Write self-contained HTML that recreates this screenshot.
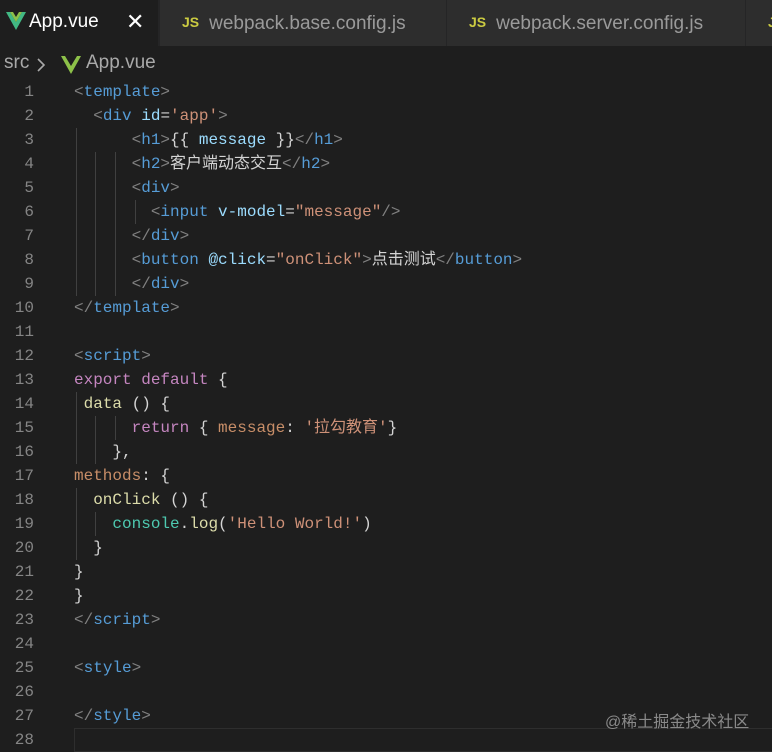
<!DOCTYPE html><html><head><meta charset="utf-8"><style>
body{margin:0;width:772px;height:750px;background:#1e1e1e;overflow:hidden;position:relative;font-family:"Liberation Sans","Noto Sans CJK SC",sans-serif}
.tabs{position:absolute;left:0;top:0;width:772px;height:46px;background:#252526}
.tab{position:absolute;top:0;height:46px;background:#2d2d2d;color:#9a9a9a;font-size:19px;line-height:44px}
.tab.a{background:#1e1e1e;color:#fff}
.js{color:#cbcb41;font-weight:bold;font-size:14px;margin-right:10px;vertical-align:2px}
.crumb{position:absolute;top:52px;color:#a9a9a9;font-size:19px}
.code{position:absolute;left:0;top:80px;font-family:"Liberation Mono","Noto Sans CJK SC",monospace;font-size:16px;color:#d4d4d4}
.l{height:24px;line-height:24px;white-space:pre;position:relative}
.n{display:inline-block;width:34px;text-align:right;color:#858585;margin-right:40px}
.g{color:#808080}.t{color:#569cd6}.at{color:#9cdcfe}.s{color:#ce9178}.k{color:#c586c0}.f{color:#dcdcaa}.c{color:#4ec9b0}.p{color:#c88e68}
.ig{position:absolute;width:1px;background:#404040}
</style></head><body>
<div class="tabs">
<div class="tab a" style="left:0;width:158px"><svg width="20" height="18" style="position:absolute;left:6px;top:12px" viewBox="0 0 20 18"><path d="M0 0h4l6 10 6-10h4L10 18z" fill="#41b883"/><path d="M4 0h3l3 5 3-5h3l-6 10z" fill="#8dc149"/></svg><span style="position:absolute;left:29px">App.vue</span><span style="position:absolute;left:126px;font-size:22px">✕</span></div>
<div class="tab" style="left:160px;width:286px"><span style="padding-left:22px"><span class="js">JS</span>webpack.base.config.js</span></div>
<div class="tab" style="left:447px;width:298px"><span style="padding-left:22px"><span class="js">JS</span>webpack.server.config.js</span></div>
<div class="tab" style="left:746px;width:30px"><span style="padding-left:22px"><span class="js">JS</span></span></div>
</div>
<div class="crumb" style="left:4px">src</div>
<svg width="10" height="16" style="position:absolute;left:36px;top:57px" viewBox="0 0 10 16"><path d="M2 2l6 6-6 6" stroke="#a9a9a9" stroke-width="1.6" fill="none"/></svg>
<svg width="20" height="18" style="position:absolute;left:61px;top:56px" viewBox="0 0 20 18"><path d="M0 0h4l6 10 6-10h4L10 18z" fill="#8dc149"/></svg>
<div class="crumb" style="left:86px">App.vue</div>
<div class="ig" style="left:76px;top:128px;height:168px"></div>
<div class="ig" style="left:95px;top:152px;height:144px"></div>
<div class="ig" style="left:115px;top:152px;height:144px"></div>
<div class="ig" style="left:135px;top:200px;height:24px"></div>
<div class="ig" style="left:76px;top:392px;height:72px"></div>
<div class="ig" style="left:95px;top:416px;height:48px"></div>
<div class="ig" style="left:115px;top:416px;height:24px"></div>
<div class="ig" style="left:76px;top:488px;height:72px"></div>
<div class="ig" style="left:95px;top:512px;height:24px"></div>
<div style="position:absolute;left:74px;top:728px;width:698px;height:22px;border:1px solid #2e2e2e;border-right:none"></div>
<div class="code">
<div class="l"><span class="n">1</span><span class="g">&lt;</span><span class="t">template</span><span class="g">&gt;</span></div>
<div class="l"><span class="n">2</span>  <span class="g">&lt;</span><span class="t">div</span> <span class="at">id</span>=<span class="s">'app'</span><span class="g">&gt;</span></div>
<div class="l"><span class="n">3</span>      <span class="g">&lt;</span><span class="t">h1</span><span class="g">&gt;</span>{{ <span class="at">message</span> }}<span class="g">&lt;/</span><span class="t">h1</span><span class="g">&gt;</span></div>
<div class="l"><span class="n">4</span>      <span class="g">&lt;</span><span class="t">h2</span><span class="g">&gt;</span>客户端动态交互<span class="g">&lt;/</span><span class="t">h2</span><span class="g">&gt;</span></div>
<div class="l"><span class="n">5</span>      <span class="g">&lt;</span><span class="t">div</span><span class="g">&gt;</span></div>
<div class="l"><span class="n">6</span>        <span class="g">&lt;</span><span class="t">input</span> <span class="at">v-model</span>=<span class="s">"message"</span><span class="g">/&gt;</span></div>
<div class="l"><span class="n">7</span>      <span class="g">&lt;/</span><span class="t">div</span><span class="g">&gt;</span></div>
<div class="l"><span class="n">8</span>      <span class="g">&lt;</span><span class="t">button</span> <span class="at">@click</span>=<span class="s">"onClick"</span><span class="g">&gt;</span>点击测试<span class="g">&lt;/</span><span class="t">button</span><span class="g">&gt;</span></div>
<div class="l"><span class="n">9</span>      <span class="g">&lt;/</span><span class="t">div</span><span class="g">&gt;</span></div>
<div class="l"><span class="n">10</span><span class="g">&lt;/</span><span class="t">template</span><span class="g">&gt;</span></div>
<div class="l"><span class="n">11</span></div>
<div class="l"><span class="n">12</span><span class="g">&lt;</span><span class="t">script</span><span class="g">&gt;</span></div>
<div class="l"><span class="n">13</span><span class="k">export</span> <span class="k">default</span> {</div>
<div class="l"><span class="n">14</span> <span class="f">data</span> () {</div>
<div class="l"><span class="n">15</span>      <span class="k">return</span> { <span class="p">message</span>: <span class="s">'拉勾教育'</span>}</div>
<div class="l"><span class="n">16</span>    },</div>
<div class="l"><span class="n">17</span><span class="p">methods</span>: {</div>
<div class="l"><span class="n">18</span>  <span class="f">onClick</span> () {</div>
<div class="l"><span class="n">19</span>    <span class="c">console</span>.<span class="f">log</span>(<span class="s">'Hello World!'</span>)</div>
<div class="l"><span class="n">20</span>  }</div>
<div class="l"><span class="n">21</span>}</div>
<div class="l"><span class="n">22</span>}</div>
<div class="l"><span class="n">23</span><span class="g">&lt;/</span><span class="t">script</span><span class="g">&gt;</span></div>
<div class="l"><span class="n">24</span></div>
<div class="l"><span class="n">25</span><span class="g">&lt;</span><span class="t">style</span><span class="g">&gt;</span></div>
<div class="l"><span class="n">26</span></div>
<div class="l"><span class="n">27</span><span class="g">&lt;/</span><span class="t">style</span><span class="g">&gt;</span></div>
<div class="l"><span class="n">28</span></div>
</div>
<div style="position:absolute;left:605px;top:708px;color:#8a8a8a;font-size:16px">@稀土掘金技术社区</div>
</body></html>
